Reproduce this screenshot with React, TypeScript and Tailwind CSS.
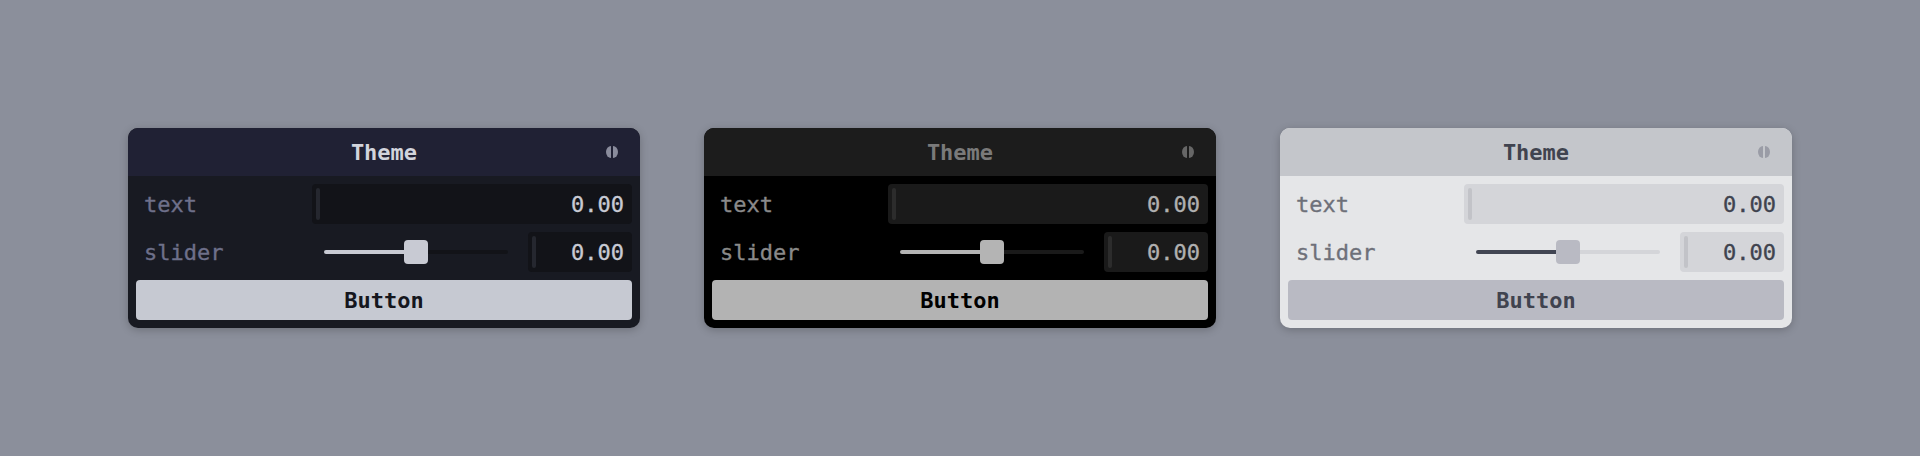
import React from "react";

type Theme = {
  title: string;
  titleText: string;
  body: string;
  input: string;
  handle: string;
  label: string;
  value: string;
  fill: string;
  rest: string;
  thumb: string;
  button: string;
  buttonText: string;
  grip: string;
};

const themes: Theme[] = [
  {
    title: "bg-[#202134]",
    titleText: "text-[#d2d4dc]",
    body: "bg-[#181a22]",
    input: "bg-[#121318]",
    handle: "bg-[#25272f]",
    label: "text-[#6e708a]",
    value: "text-[#c8cad3]",
    fill: "bg-[#c8cad3]",
    rest: "bg-[#121318]",
    thumb: "bg-[#c8cad3]",
    button: "bg-[#c6c9d2]",
    buttonText: "text-[#15161d]",
    grip: "#8a8c9c",
  },
  {
    title: "bg-[#1c1c1c]",
    titleText: "text-[#7a7a7a]",
    body: "bg-[#000000]",
    input: "bg-[#1a1a1a]",
    handle: "bg-[#2c2c2c]",
    label: "text-[#8a8a8a]",
    value: "text-[#b0b0b0]",
    fill: "bg-[#b4b4b4]",
    rest: "bg-[#1a1a1a]",
    thumb: "bg-[#b4b4b4]",
    button: "bg-[#b3b3b3]",
    buttonText: "text-[#000000]",
    grip: "#666666",
  },
  {
    title: "bg-[#c4c6cb]",
    titleText: "text-[#40434f]",
    body: "bg-[#e5e6e8]",
    input: "bg-[#d4d5d9]",
    handle: "bg-[#c2c3c8]",
    label: "text-[#6e7079]",
    value: "text-[#40434f]",
    fill: "bg-[#414552]",
    rest: "bg-[#d4d5d9]",
    thumb: "bg-[#b9bac3]",
    button: "bg-[#b9bac3]",
    buttonText: "text-[#40434f]",
    grip: "#9a9ca6",
  },
];

const font = { fontFamily: '"DejaVu Sans Mono", "Liberation Mono", monospace' };

function Grip({ color }: { color: string }) {
  return (
    <svg width="12" height="12" viewBox="0 0 12 12">
      <path d="M5 0 A5 6 0 0 0 5 12 Z" fill={color} />
      <path d="M7 0 A5 6 0 0 1 7 12 Z" fill={color} />
    </svg>
  );
}

function NumberInput({ t, className }: { t: Theme; className: string }) {
  return (
    <div className={`flex h-10 items-center rounded-[4px] pl-1 pr-2 ${t.input} ${className}`}>
      <div className={`h-8 w-1 rounded-[2px] ${t.handle}`} />
      <div className={`flex-1 pt-[2px] text-right text-[22px] leading-none [-webkit-text-stroke:0.35px_currentColor] ${t.value}`}>0.00</div>
    </div>
  );
}

function Panel({ t }: { t: Theme }) {
  return (
    <div className={`w-[512px] overflow-hidden rounded-[10px] shadow-[0_2px_8px_rgba(0,0,0,0.22)] ${t.body}`} style={font}>
      <div className={`relative flex h-12 items-center justify-center ${t.title}`}>
        <span className={`pt-[2px] text-[22px] font-bold leading-none ${t.titleText}`}>Theme</span>
        <div className="absolute right-[22px] top-[18px] flex">
          <Grip color={t.grip} />
        </div>
      </div>
      <div className="flex flex-col gap-2 p-2">
        <div className="flex h-10 items-center">
          <div className={`w-[176px] pl-2 pt-[2px] text-[22px] leading-none [-webkit-text-stroke:0.35px_currentColor] ${t.label}`}>text</div>
          <NumberInput t={t} className="flex-1" />
        </div>
        <div className="flex h-10 items-center">
          <div className={`w-[176px] pl-2 pt-[2px] text-[22px] leading-none [-webkit-text-stroke:0.35px_currentColor] ${t.label}`}>slider</div>
          <div className="flex flex-1 items-center pl-3 pr-5">
            <div className="relative flex h-6 flex-1 items-center">
              <div className="flex h-1 w-full overflow-hidden rounded-full">
                <div className={`h-full w-1/2 ${t.fill}`} />
                <div className={`h-full w-1/2 ${t.rest}`} />
              </div>
              <div className={`absolute left-1/2 top-0 h-6 w-6 -translate-x-1/2 rounded-[4px] ${t.thumb}`} />
            </div>
          </div>
          <NumberInput t={t} className="w-[104px]" />
        </div>
        <div className={`flex h-10 items-center justify-center rounded-[4px] ${t.button}`}>
          <span className={`pt-[2px] text-[22px] font-bold leading-none ${t.buttonText}`}>Button</span>
        </div>
      </div>
    </div>
  );
}

export default function App() {
  return (
    <div className="flex h-[456px] w-full items-center justify-center gap-16 bg-[#8b8f9b]">
      {themes.map((t, i) => (
        <Panel key={i} t={t} />
      ))}
    </div>
  );
}
